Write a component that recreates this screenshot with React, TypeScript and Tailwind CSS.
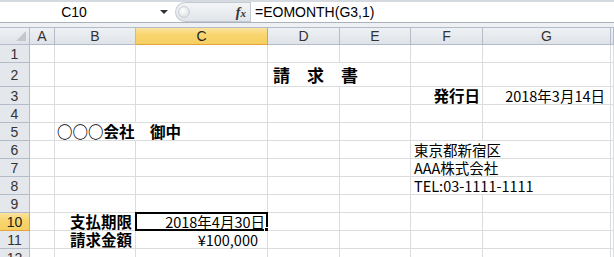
const jp = "font-['Noto_Sans_CJK_JP',sans-serif]"
const ui = "font-['Liberation_Sans',Arial,sans-serif]"

function Hd({ children, sel }: { children?: React.ReactNode; sel?: boolean }) {
  return (
    <div
      className={`flex items-center justify-center border-r border-b text-[14px] leading-none ${ui} ${
        sel
          ? "border-[#e3a33b] bg-[linear-gradient(#fbe3a0,#f8d66f_40%,#f6cf62)] text-[#222]"
          : "border-[#b3bcc8] bg-[linear-gradient(#eef1f4,#dfe3e8)] text-[#333]"
      }`}
    >
      {children}
    </div>
  )
}

function Rh({ n, sel }: { n: number; sel?: boolean }) {
  return (
    <div
      className={`flex items-center justify-center border-r border-b text-[14px] leading-none ${ui} ${
        sel
          ? "border-[#e3a33b] bg-[linear-gradient(#fbe3a0,#f8d66f_40%,#f6cf62)] text-[#222]"
          : "border-[#b3bcc8] bg-[#e4e7eb] text-[#333]"
      }`}
    >
      {n}
    </div>
  )
}

function C({ children, className = "" }: { children?: React.ReactNode; className?: string }) {
  return (
    <div
      className={`relative flex items-end whitespace-nowrap border-r border-b border-[#dadcdd] bg-white leading-[17px] text-black ${jp} ${className}`}
    >
      {children}
    </div>
  )
}

function Empty({ n }: { n: number }) {
  return (
    <>
      {Array.from({ length: n }, (_, i) => (
        <C key={i} />
      ))}
    </>
  )
}

export default function App() {
  return (
    <div className="h-[257px] w-[614px] overflow-hidden bg-white">
      {/* formula bar */}
      <div className="flex h-[23px] border-t-2 border-b border-t-[#d5dae1] border-b-[#a9b1bc] bg-white">
        <div className={`flex w-[175px] items-center ${ui}`}>
          <div className="flex-1 pr-[12px] text-center text-[14px] text-black">C10</div>
          <div className="mr-[7px] h-0 w-0 border-x-[4px] border-t-[4px] border-x-transparent border-t-[#333]" />
        </div>
        <div className="flex w-[75px] items-center rounded-l-full border border-r-0 border-[#c4cad2] bg-[linear-gradient(#f3f5f7,#e1e5ea)]">
          <div className="ml-[2px] h-[12px] w-[12px] rounded-full border border-[#c9ced5] bg-[radial-gradient(circle_at_40%_35%,#ffffff,#d3d8de)]" />
          <div className="flex-1" />
          <div className="mr-[4px] font-['Liberation_Serif',serif] text-[14px] font-bold italic text-[#333]">
            f<span className="text-[11px]">x</span>
          </div>
        </div>
        <div className={`flex flex-1 items-center border-l border-[#c4cad2] pl-[4px] text-[14px] text-black ${ui}`}>
          =EOMONTH(G3,1)
        </div>
      </div>
      <div className="h-[4px] bg-[#eef0f3]" />

      {/* sheet */}
      <div className="grid grid-cols-[30px_25px_81px_132px_72px_71px_72px_128px_1fr] grid-rows-[17px_18px_24px_repeat(10,18px)] border-t border-[#b3bcc8]">
        {/* corner */}
        <div className="flex items-end justify-end border-r border-b border-[#b3bcc8] bg-[linear-gradient(#eef1f4,#dfe3e8)] p-[3px]">
          <svg width="10" height="10" viewBox="0 0 10 10">
            <path d="M10 0 L10 10 L0 10 Z" fill="#c3c8cf" />
          </svg>
        </div>
        <Hd>A</Hd>
        <Hd>B</Hd>
        <Hd sel>C</Hd>
        <Hd>D</Hd>
        <Hd>E</Hd>
        <Hd>F</Hd>
        <Hd>G</Hd>
        <Hd />

        {/* 1 */}
        <Rh n={1} />
        <Empty n={8} />

        {/* 2 */}
        <Rh n={2} />
        <Empty n={3} />
        <C className="col-span-2 pl-[5px] pb-[2px] text-[17px] leading-[19px] font-bold">請　求　書</C>
        <Empty n={3} />

        {/* 3 */}
        <Rh n={3} />
        <Empty n={5} />
        <C className="justify-end pr-[2px] text-[15.5px] font-bold">発行日</C>
        <C className="justify-end pr-[5px] text-[14.5px]">2018年3月14日</C>
        <C />

        {/* 4 */}
        <Rh n={4} />
        <Empty n={8} />

        {/* 5 */}
        <Rh n={5} />
        <C />
        <C className="col-span-2 pl-[2px] text-[15.5px] font-bold">○○○会社　御中</C>
        <Empty n={5} />

        {/* 6 */}
        <Rh n={6} />
        <Empty n={5} />
        <C className="col-span-2 pl-[3px] text-[14.5px]">東京都新宿区</C>
        <C />

        {/* 7 */}
        <Rh n={7} />
        <Empty n={5} />
        <C className="col-span-2 pl-[3px] text-[14.5px]">AAA株式会社</C>
        <C />

        {/* 8 */}
        <Rh n={8} />
        <Empty n={5} />
        <C className="col-span-2 pl-[3px] text-[14.5px]">TEL:03-1111-1111</C>
        <C />

        {/* 9 */}
        <Rh n={9} />
        <Empty n={8} />

        {/* 10 */}
        <Rh n={10} sel />
        <C />
        <C className="justify-end pr-[3px] text-[15.5px] font-bold">支払期限</C>
        <C className="justify-end pr-[2px] text-[14.5px]">
          2018年4月30日
          <div className="pointer-events-none absolute -top-[1px] -left-[1px] h-[19px] w-[133px] border-2 border-black" />
          <div className="absolute -right-[3px] -bottom-[3px] h-[6px] w-[6px] border border-white bg-black" />
        </C>
        <Empty n={5} />

        {/* 11 */}
        <Rh n={11} />
        <C />
        <C className="justify-end pr-[3px] text-[15.5px] font-bold">請求金額</C>
        <C className="justify-end pr-[9px] text-[14.5px]">¥100,000</C>
        <Empty n={5} />

        {/* 12 */}
        <Rh n={12} />
        <Empty n={8} />
      </div>
    </div>
  )
}
